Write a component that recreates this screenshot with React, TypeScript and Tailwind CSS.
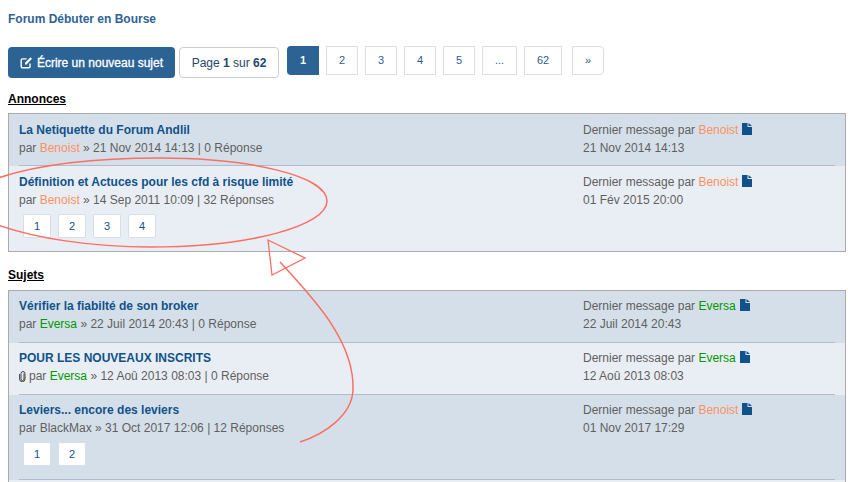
type Row = {
  title: string;
  author: string;
  authorColor?: string;
  date: string;
  replies: string;
  lastAuthor: string;
  lastColor: string;
  lastDate: string;
  pages?: string[];
  clip?: boolean;
  alt?: boolean;
  noLine?: boolean;
};

const ORANGE = "text-[#ff9160]";
const GREEN = "text-[#009900]";

const annonces: Row[] = [
  { title: "La Netiquette du Forum Andlil", author: "Benoist", authorColor: ORANGE, date: "21 Nov 2014 14:13", replies: "0 Réponse", lastAuthor: "Benoist", lastColor: ORANGE, lastDate: "21 Nov 2014 14:13" },
  { title: "Définition et Actuces pour les cfd à risque limité", author: "Benoist", authorColor: ORANGE, date: "14 Sep 2011 10:09", replies: "32 Réponses", lastAuthor: "Benoist", lastColor: ORANGE, lastDate: "01 Fév 2015 20:00", pages: ["1", "2", "3", "4"], alt: true, noLine: true },
];

const sujets: Row[] = [
  { title: "Vérifier la fiabilté de son broker", author: "Eversa", authorColor: GREEN, date: "22 Juil 2014 20:43", replies: "0 Réponse", lastAuthor: "Eversa", lastColor: GREEN, lastDate: "22 Juil 2014 20:43" },
  { title: "POUR LES NOUVEAUX INSCRITS", author: "Eversa", authorColor: GREEN, date: "12 Aoû 2013 08:03", replies: "0 Réponse", lastAuthor: "Eversa", lastColor: GREEN, lastDate: "12 Aoû 2013 08:03", clip: true, alt: true },
  { title: "Leviers... encore des leviers", author: "BlackMax", date: "31 Oct 2017 12:06", replies: "12 Réponses", lastAuthor: "Benoist", lastColor: ORANGE, lastDate: "01 Nov 2017 17:29", pages: ["1", "2"] },
];

const FileIcon = () => (
  <svg width="10" height="12" viewBox="0 0 10 12" className="ml-1 inline-block align-[-1px]">
    <path d="M0 0H5.5V4H10V12H0Z M6.5 0L10 3H6.5Z" fill="#105289" />
  </svg>
);

const ClipIcon = () => (
  <svg width="7" height="11" viewBox="0 0 7 11" className="mr-[3px] inline-block align-[-2px]" fill="none" stroke="#444" strokeWidth="1">
    <path d="M5 2.5V8a1.5 1.5 0 0 1-3 0V2.5a2 2 0 0 1 4 0V8a2.7 2.7 0 0 1-5.4 0V3" />
  </svg>
);

const TopicRow = ({ row, raised }: { row: Row; raised?: boolean }) => (
  <div className={row.alt ? "bg-[#e9eef5]" : "bg-[#d5dfe9]"}>
    <div className={`mx-[10px] flex border-b ${raised ? "pb-[9px] pt-[6px]" : "pb-2 pt-[7px]"} ${row.noLine ? "border-transparent" : "border-[#b0bccb]"}`}>
      <div className="w-[564px] shrink-0">
        <div className="text-xs font-bold leading-[18px] text-[#105289]">{row.title}</div>
        <div className="text-xs leading-[18px] text-[#5f5f5f]">
          {row.clip && <ClipIcon />}
          par <span className={row.authorColor ?? ""}>{row.author}</span> » {row.date} | {row.replies}
        </div>
        {row.pages && (
          <div className="mb-1 ml-1 mt-[5px] flex gap-[7px]">
            {row.pages.map((p) => (
              <span key={p} className="flex h-6 w-7 items-center justify-center rounded-[2px] border border-[#d5dfe9] bg-white text-[11px] text-[#105289]">
                {p}
              </span>
            ))}
          </div>
        )}
      </div>
      <div className="text-xs leading-[18px] text-[#5f5f5f]">
        <div>
          Dernier message par <span className={row.lastColor}>{row.lastAuthor}</span>
          <FileIcon />
        </div>
        <div>{row.lastDate}</div>
      </div>
    </div>
  </div>
);

const pageLinks = ["2", "3", "4", "5"];

export default function App() {
  return (
    <div className="relative h-[482px] w-[848px] overflow-hidden bg-white pl-2 pr-[2px] font-['Liberation_Sans',Arial,sans-serif]">
      <h1 className="pt-[10px] text-xs font-bold leading-[18px] text-[#2f6395]">Forum Débuter en Bourse</h1>

      <div className="mt-[19px] flex items-start">
        <button className="flex h-[31px] w-[167px] items-center justify-center gap-1 rounded-[4px] bg-[#2c6395] text-xs text-white [-webkit-text-stroke:0.3px_white]">
          <svg width="13" height="13" viewBox="0 0 13 13" fill="none" stroke="white" strokeWidth="1.4">
            <path d="M10 7.5V10.5a1.3 1.3 0 0 1-1.3 1.3H2.5a1.3 1.3 0 0 1-1.3-1.3V4.2a1.3 1.3 0 0 1 1.3-1.3H6.5" />
            <path d="M5 8.5V6.8L10.5 1.3L12 2.8L6.6 8.5Z" fill="white" stroke="none" />
          </svg>
          Écrire un nouveau sujet
        </button>
        <div className="ml-1 flex h-[31px] w-[100px] items-center justify-center rounded-[4px] border border-[#cccccc] text-xs text-[#24476b]">
          <span>
            Page <b>1</b> sur <b>62</b>
          </span>
        </div>
        <nav className="-mt-px ml-2 flex text-[11px] text-[#2c5d8f]">
          <span className="flex h-[29px] w-[32px] items-center justify-center rounded-l-[4px] bg-[#2c6395] font-bold text-white">1</span>
          {pageLinks.map((p) => (
            <span key={p} className="ml-[7px] flex h-[29px] w-[32px] items-center justify-center border border-[#dddddd]">
              {p}
            </span>
          ))}
          <span className="ml-[7px] flex h-[29px] w-[35px] items-center justify-center border border-[#dddddd]">...</span>
          <span className="ml-[7px] flex h-[29px] w-[38px] items-center justify-center border border-[#dddddd]">62</span>
          <span className="ml-[10px] flex h-[29px] w-[32px] items-center justify-center rounded-r-[4px] border border-[#dddddd]">»</span>
        </nav>
      </div>

      <div className="mt-[12px] flex flex-col gap-[14px]">
        <section>
          <h2 className="mb-[5px] text-xs font-bold leading-[18px] text-black underline">Annonces</h2>
          <div className="border border-[#a9abae]">
            {annonces.map((r) => (
              <TopicRow key={r.title} row={r} />
            ))}
          </div>
        </section>
        <section>
          <h2 className="mb-[6px] text-xs font-bold leading-[18px] text-black underline">Sujets</h2>
          <div className="border border-[#a9abae]">
            {sujets.map((r) => (
              <TopicRow key={r.title} row={r} raised />
            ))}
            <div className="h-10 bg-[#e9eef5]" />
          </div>
        </section>
      </div>

      {/* annotation drawn over the page */}
      <svg className="pointer-events-none absolute left-0 top-0" width="848" height="482" fill="none" stroke="#fb6f62" strokeWidth="1.5">
        <path d="M-2 178C40 164 100 158 160 158C250 158 327 176 327 201C327 226 250 247 150 247C90 247 35 238 -2 225" />
        <path d="M268 240L305 258L272 275Z" strokeWidth="1.3" />
        <path d="M280 262C310 295 355 340 353 390C352 415 325 434 300 442" />
      </svg>
    </div>
  );
}
